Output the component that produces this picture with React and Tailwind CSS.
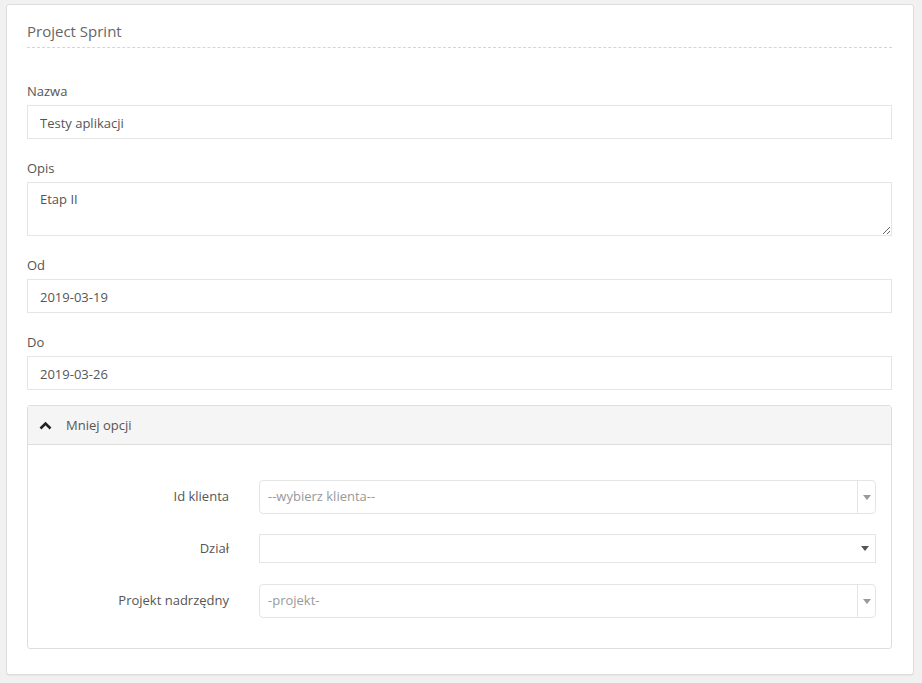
import { useState } from "react";

const font = { fontFamily: '"Open Sans", "Liberation Sans", sans-serif' };

function Field({ label, value, className = "" }) {
  return (
    <div className={className}>
      <label className="block h-[18px] text-[13px] leading-[18px] text-[#555]">{label}</label>
      <input
        readOnly
        value={value}
        className="mt-[5px] block h-[34px] w-full border border-[#e5e5e5] bg-white px-3 pt-[2px] text-[13px] text-[#555] outline-none"
      />
    </div>
  );
}

function Arrow({ dark }) {
  return (
    <svg width="8" height="5" viewBox="0 0 8 5" className={dark ? "text-[#555]" : "text-[#999]"}>
      <path d="M0 0h8L4 5z" fill="currentColor" />
    </svg>
  );
}

function Select2({ placeholder }) {
  return (
    <div className="flex h-[34px] flex-1 items-center rounded-[4px] border border-[#e5e5e5] bg-white">
      <span className="flex-1 pl-[8px] text-[13px] text-[#999]">{placeholder}</span>
      <div className="flex h-full w-[18px] items-center justify-center border-l border-[#e5e5e5]">
        <Arrow />
      </div>
    </div>
  );
}

export default function App() {
  const [open, setOpen] = useState(true);

  return (
    <div className="min-h-[683px] bg-[#f1f1f1] pt-1" style={font}>
      <div className="ml-[6px] w-[908px] rounded-[3px] border border-[#dedede] bg-white pb-[25px] pl-5 pr-[21px] pt-[16px] shadow-[0_1px_1px_rgba(0,0,0,0.05)]">
        <div className="border-b border-dashed border-[#d5d5d5] pb-[6px]">
          <h2 className="h-[20px] text-[15px] leading-[20px] text-[#666]">Project Sprint</h2>
        </div>

        <Field label="Nazwa" value="Testy aplikacji" className="mt-[34px]" />

        <div className="mt-[20px]">
          <label className="block h-[18px] text-[13px] leading-[18px] text-[#555]">Opis</label>
          <textarea
            readOnly
            defaultValue="Etap II"
            className="mt-[5px] block h-[54px] w-full border border-[#e5e5e5] bg-white px-3 py-[7px] text-[13px] leading-[18px] text-[#555] outline-none"
          />
        </div>

        <Field label="Od" value="2019-03-19" className="mt-[20px]" />
        <Field label="Do" value="2019-03-26" className="mt-[20px]" />

        <div className="mt-[15px] rounded-[3px] border border-[#dedede]">
          <button
            onClick={() => setOpen(!open)}
            className="flex h-[39px] w-full items-center border-b border-[#dedede] bg-[#f5f5f5] pl-[11px] pt-[1px] text-left"
          >
            <svg width="13" height="9" viewBox="0 0 13 9" className="text-[#222]">
              <path d="M1.5 7.5l5-5 5 5" fill="none" stroke="currentColor" strokeWidth="2.6" />
            </svg>
            <span className="ml-[14px] text-[13px] text-[#555]">Mniej opcji</span>
          </button>

          {open && (
            <div className="pb-[30px] pl-0 pr-[15px] pt-[35px]">
              <div className="flex items-center">
                <label className="w-[201px] text-right text-[13px] text-[#555]">Id klienta</label>
                <div className="ml-[30px] flex flex-1">
                  <Select2 placeholder="--wybierz klienta--" />
                </div>
              </div>

              <div className="mt-[20px] flex items-center">
                <label className="w-[201px] text-right text-[13px] text-[#555]">Dział</label>
                <div className="ml-[30px] flex h-[29px] flex-1 items-center justify-end border border-[#e5e5e5] bg-white pr-[6px]">
                  <Arrow dark />
                </div>
              </div>

              <div className="mt-[21px] flex items-center">
                <label className="w-[201px] text-right text-[13px] text-[#555]">Projekt nadrzędny</label>
                <div className="ml-[30px] flex flex-1">
                  <Select2 placeholder="-projekt-" />
                </div>
              </div>
            </div>
          )}
        </div>
      </div>
    </div>
  );
}
